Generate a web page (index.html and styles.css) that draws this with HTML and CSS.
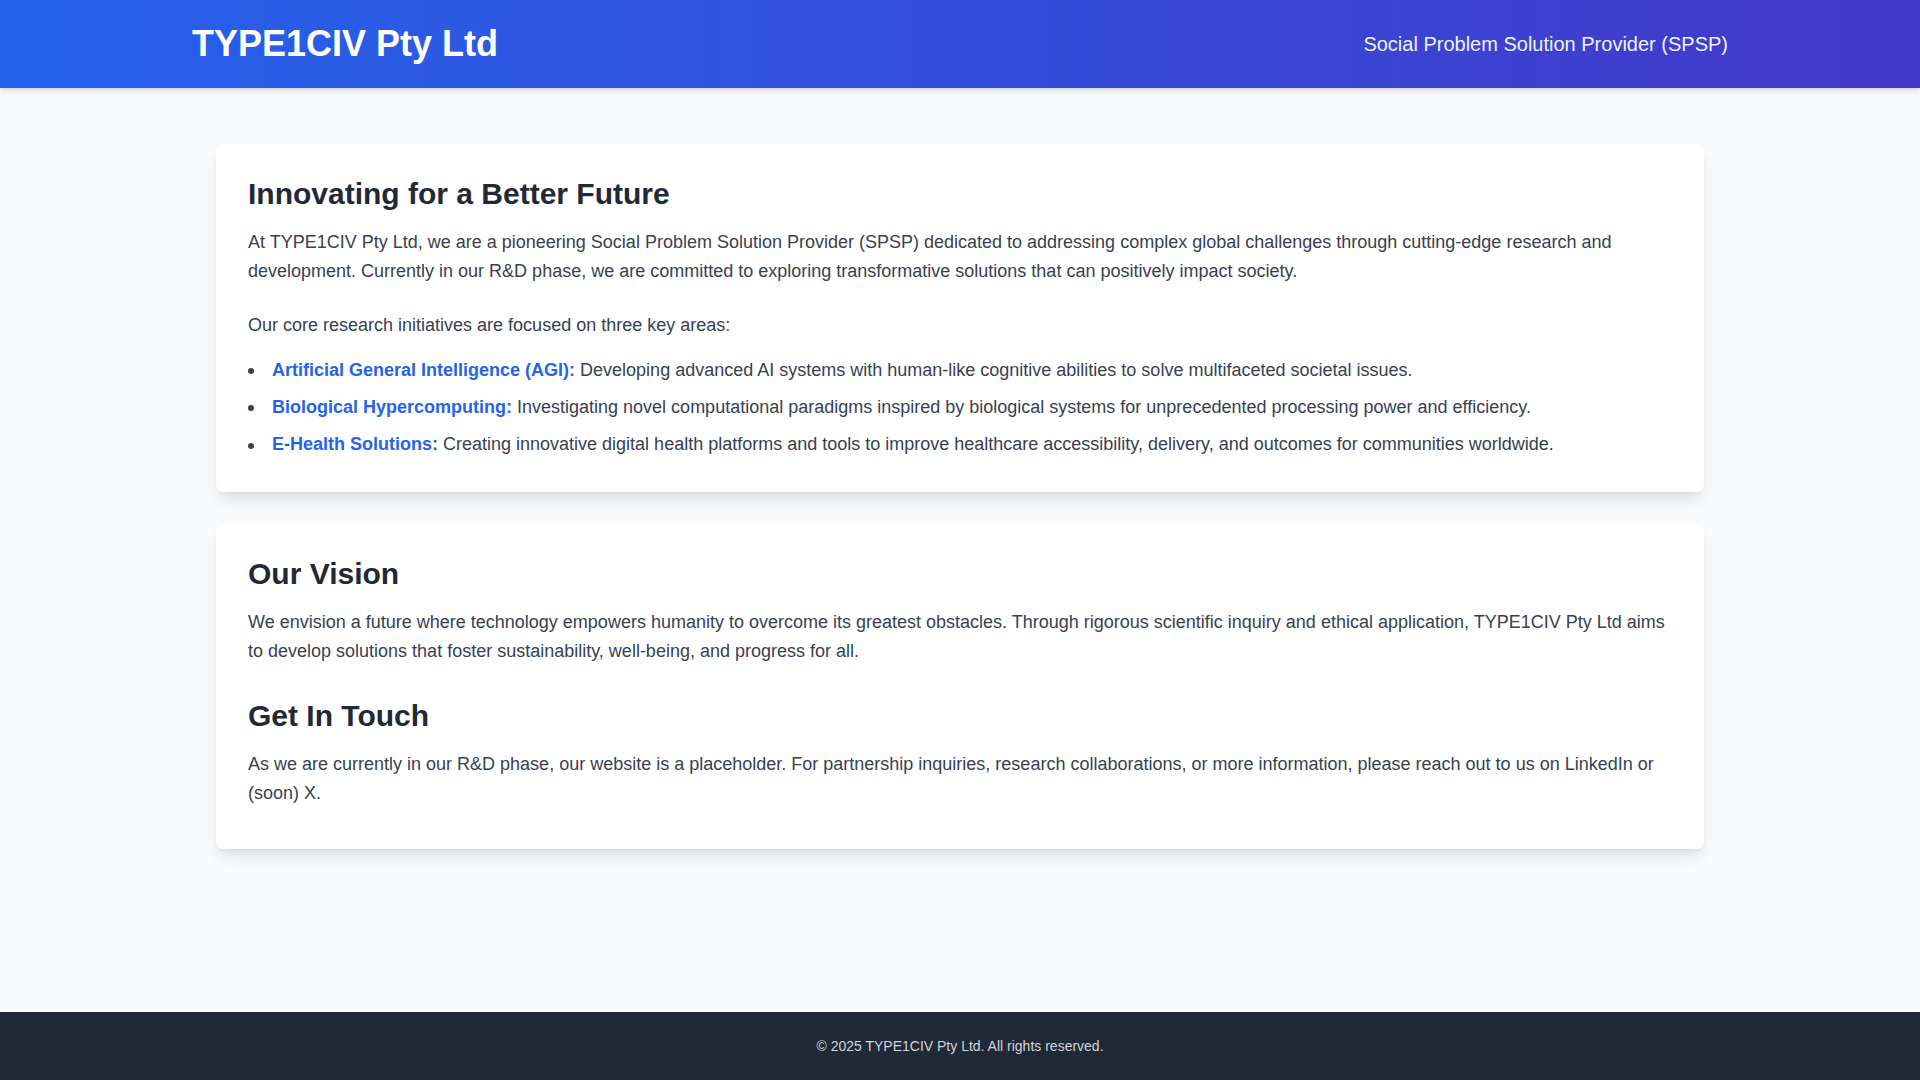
FILE: index.html
```html
<!DOCTYPE html>
<html lang="en">
<head>
    <meta charset="UTF-8">
    <title>TYPE1CIV Pty Ltd</title>
    <link rel="stylesheet" href="styles.css">
</head>
<body>
    <header class="site-header">
        <div class="header-inner">
            <h1 class="brand">TYPE1CIV Pty Ltd</h1>
            <p class="tagline">Social Problem Solution Provider (SPSP)</p>
        </div>
    </header>

    <main class="main">
        <section class="card">
            <h2>Innovating for a Better Future</h2>
            <p class="intro">At TYPE1CIV Pty Ltd, we are a pioneering Social Problem Solution Provider (SPSP) dedicated to addressing complex global challenges through cutting-edge research and development. Currently in our R&amp;D phase, we are committed to exploring transformative solutions that can positively impact society.</p>
            <p class="lead-in">Our core research initiatives are focused on three key areas:</p>
            <ul class="areas">
                <li><strong>Artificial General Intelligence (AGI):</strong> Developing advanced AI systems with human-like cognitive abilities to solve multifaceted societal issues.</li>
                <li><strong>Biological Hypercomputing:</strong> Investigating novel computational paradigms inspired by biological systems for unprecedented processing power and efficiency.</li>
                <li><strong>E-Health Solutions:</strong> Creating innovative digital health platforms and tools to improve healthcare accessibility, delivery, and outcomes for communities worldwide.</li>
            </ul>
        </section>

        <section class="card">
            <div class="block">
                <h2>Our Vision</h2>
                <p>We envision a future where technology empowers humanity to overcome its greatest obstacles. Through rigorous scientific inquiry and ethical application, TYPE1CIV Pty Ltd aims to develop solutions that foster sustainability, well-being, and progress for all.</p>
            </div>
            <div class="block">
                <h2>Get In Touch</h2>
                <p>As we are currently in our R&amp;D phase, our website is a placeholder. For partnership inquiries, research collaborations, or more information, please reach out to us on LinkedIn or (soon) X.</p>
            </div>
        </section>
    </main>

    <footer class="site-footer">
        <p>&copy; 2025 TYPE1CIV Pty Ltd. All rights reserved.</p>
    </footer>
</body>
</html>
```

FILE: styles.css
```css
* {
    box-sizing: border-box;
}
html, body {
    margin: 0;
    padding: 0;
}
body {
    min-height: 100vh;
    display: flex;
    flex-direction: column;
    background: #f8fafc;
    font-family: "Liberation Sans", Arial, sans-serif;
    color: #374151;
}
.site-header {
    background: linear-gradient(to right, #2563eb, #4338ca);
    color: #fff;
    padding: 24px 0;
    box-shadow: 0 4px 6px -1px rgba(0, 0, 0, 0.1), 0 2px 4px -2px rgba(0, 0, 0, 0.1);
    position: relative;
    z-index: 1;
}
.header-inner {
    max-width: 1536px;
    margin: 0 auto;
    display: flex;
    justify-content: space-between;
    align-items: center;
}
.brand {
    margin: 0;
    font-size: 36px;
    line-height: 40px;
    font-weight: 700;
}
.tagline {
    margin: 0;
    font-size: 20px;
    line-height: 28px;
    color: #eef2ff;
}
.main {
    flex: 1;
    width: 100%;
    max-width: 1536px;
    margin: 0 auto;
    padding: 56px 24px 48px;
}
.card {
    background: #fff;
    border-radius: 8px;
    padding: 32px;
    margin-bottom: 32px;
    box-shadow: 0 10px 15px -3px rgba(0, 0, 0, 0.1), 0 4px 6px -4px rgba(0, 0, 0, 0.1);
}
.card h2 {
    margin: 0 0 16px;
    font-size: 30px;
    line-height: 36px;
    font-weight: 700;
    color: #1f2937;
}
.card p {
    margin: 0;
    font-size: 18px;
    line-height: 1.625;
}
.card .intro {
    margin-bottom: 24px;
}
.card .lead-in {
    margin-bottom: 16px;
}
.areas {
    margin: 0;
    padding: 0;
    list-style: none;
    font-size: 18px;
    line-height: 1.625;
}
.areas li::before {
    content: "";
    display: inline-block;
    width: 6px;
    height: 6px;
    border-radius: 50%;
    background: currentColor;
    margin-right: 18px;
    vertical-align: middle;
}
.areas li + li {
    margin-top: 8px;
}
.areas strong {
    color: #2563eb;
    font-weight: 700;
}
.block + .block {
    margin-top: 32px;
}
.block:last-child p {
    margin-bottom: 8px;
}
.site-footer {
    background: #1f2937;
    color: #d1d5db;
    text-align: center;
    padding: 24px 0;
}
.site-footer p {
    margin: 0;
    font-size: 14px;
    line-height: 20px;
}
```
